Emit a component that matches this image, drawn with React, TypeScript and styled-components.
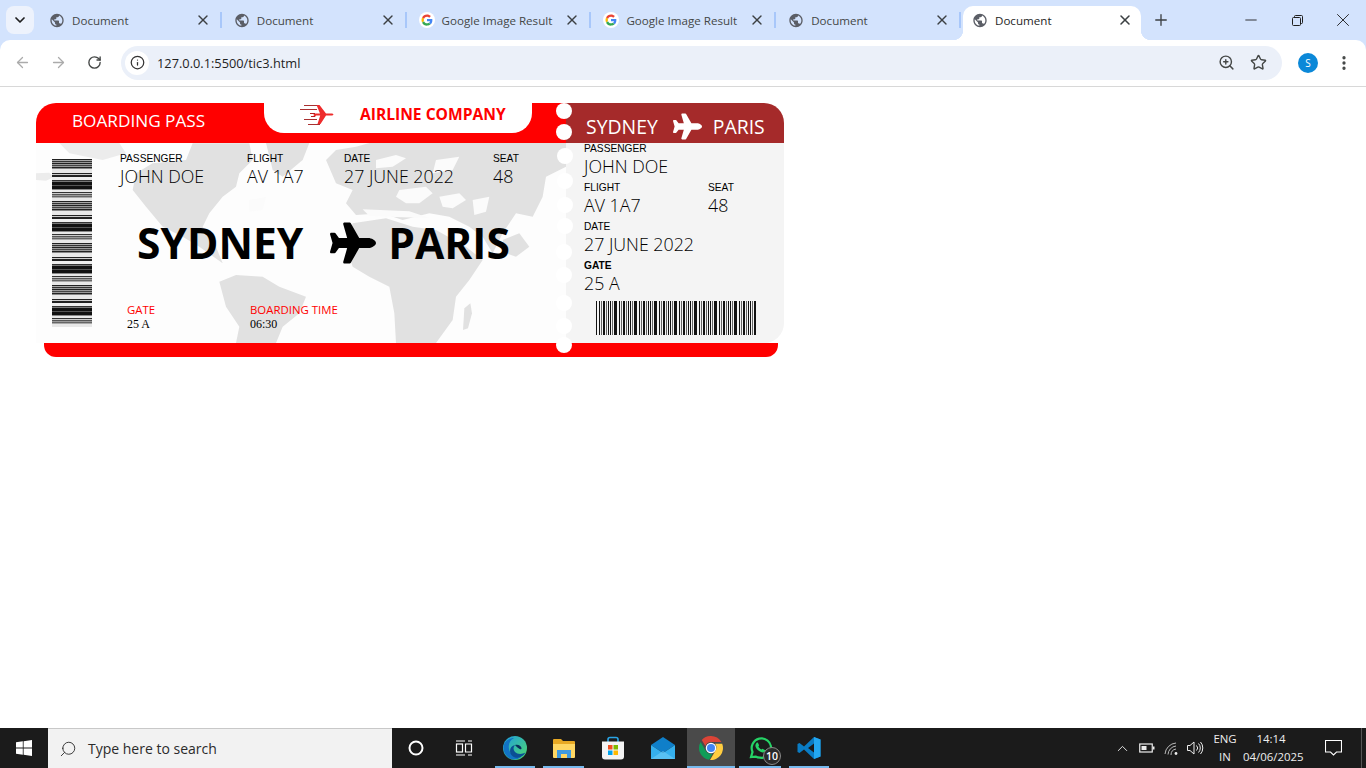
import React from "react";
import styled, { createGlobalStyle } from "styled-components";
import { FaPlane } from "react-icons/fa";
import { MdPublic } from "react-icons/md";
import { ChevronDown, ArrowLeft, ArrowRight, RotateCw, Info, ZoomIn, Star, EllipsisVertical, X, Plus, Minus, ChevronUp, Search } from "lucide-react";

const UI_FONT = `"Open Sans", "Noto Sans", sans-serif`;

const GlobalStyle = createGlobalStyle`
  html, body {
    margin: 0;
    height: 100%;
    background: #fff;
    overflow: hidden;
  }
  #root {
    height: 100%;
  }
  * {
    box-sizing: border-box;
  }
`;

const Screen = styled.div`
  display: flex;
  flex-direction: column;
  height: 768px;
  background: #d3e3fd;
  font-family: ${UI_FONT};
`;

/* browser chrome */
const TabStrip = styled.div`
  display: flex;
  align-items: flex-end;
  height: 40px;
  padding-left: 6px;
  background: #d3e3fd;
`;

const TabListButton = styled.div`
  display: flex;
  align-items: center;
  justify-content: center;
  width: 28px;
  height: 28px;
  margin: 0 3px 6px 0;
  border-radius: 8px;
  background: #edf2fc;
  color: #1f1f1f;
`;

const Tab = styled.div<{ $active?: boolean }>`
  position: relative;
  display: flex;
  align-items: center;
  flex: none;
  width: ${(p) => (p.$active ? "178px" : "184.8px")};
  height: 34px;
  margin-left: ${(p) => (p.$active ? "2px" : "0")};
  padding: 0 ${(p) => (p.$active ? "8px" : "11px")} 6px ${(p) => (p.$active ? "9px" : "12px")};
  border-radius: 10px 10px 0 0;
  background: ${(p) => (p.$active ? "#fff" : "transparent")};
  color: #444746;
  font-size: 11.6px;

  ${(p) =>
    p.$active
      ? `
    color: #1f1f1f;
    &::before, &::after {
      content: "";
      position: absolute;
      bottom: 0;
      width: 10px;
      height: 10px;
    }
    &::before {
      left: -10px;
      background: radial-gradient(circle at 0 0, transparent 10px, #fff 10.5px);
    }
    &::after {
      right: -10px;
      background: radial-gradient(circle at 100% 0, transparent 10px, #fff 10.5px);
    }
  `
      : `
    &::after {
      content: "";
      position: absolute;
      right: 0;
      top: 6px;
      width: 2px;
      height: 16px;
      background: #a8c7fa;
    }
  `}
`;

const TabIcon = styled.span`
  display: flex;
  align-items: center;
  justify-content: center;
  width: 16px;
  height: 16px;
  margin-right: 7px;
  color: #5b5e66;
`;

const TabTitle = styled.span`
  flex: 1;
  white-space: nowrap;
`;

const TabClose = styled.span`
  display: flex;
  color: #3c4043;
`;

const NewTab = styled.div`
  display: flex;
  align-items: center;
  justify-content: center;
  width: 20px;
  height: 40px;
  margin-left: 10px;
  color: #3c4043;
`;

const WindowButtons = styled.div`
  display: flex;
  align-items: center;
  align-self: stretch;
  margin-left: auto;
`;

const WindowButton = styled.div`
  display: flex;
  align-items: center;
  justify-content: center;
  width: 46px;
  height: 40px;
  color: #1f1f1f;
`;

const Toolbar = styled.div`
  display: flex;
  align-items: center;
  flex: none;
  height: 47px;
  padding: 0 0 1px 4px;
  border-bottom: 1px solid #d8d8d8;
  border-radius: 10px 10px 0 0;
  background: #fff;
`;

const NavButton = styled.div<{ $muted?: boolean }>`
  display: flex;
  align-items: center;
  justify-content: center;
  width: 36px;
  height: 34px;
  color: ${(p) => (p.$muted ? "#ababab" : "#444746")};
`;

const Omnibox = styled.div`
  display: flex;
  align-items: center;
  width: 1161px;
  height: 34px;
  margin-left: 9px;
  padding: 0 15px 0 4px;
  border-radius: 17px;
  background: #ebf0f9;
  color: #1f1f1f;
  font-size: 12.8px;
`;

const SiteChip = styled.span`
  display: flex;
  align-items: center;
  justify-content: center;
  width: 24px;
  height: 24px;
  margin-right: 8px;
  border-radius: 50%;
  background: #fff;
  color: #333;
`;

const Url = styled.span`
  flex: 1;
`;

const OmniIcon = styled.span`
  display: flex;
  margin-left: 15px;
  color: #444746;
`;

const Avatar = styled.div`
  display: flex;
  align-items: center;
  justify-content: center;
  width: 20px;
  height: 20px;
  margin-left: 16px;
  border-radius: 50%;
  background: #0b88d8;
  color: #fff;
  font-size: 10px;
`;

const MenuButton = styled.div`
  display: flex;
  margin-left: 17px;
  color: #444746;
`;

/* page with ticket */
const Page = styled.main`
  flex: 1;
  padding: 16px 0 0 36px;
  background: #fff;
`;

const Ticket = styled.div`
  position: relative;
  width: 748px;
`;

const TicketRow = styled.div`
  display: flex;
`;

const MainHeader = styled.div`
  display: flex;
  width: 530px;
  height: 40px;
  border-top-left-radius: 20px;
  background: #ff0000;
  color: #fff;
`;

const BoardingTitle = styled.div`
  width: 228px;
  padding: 6px 0 0 36px;
  font-size: 17.2px;
  line-height: 24px;
  white-space: nowrap;
`;

const LogoTab = styled.div`
  display: flex;
  align-items: flex-start;
  width: 268px;
  height: 30px;
  padding: 1px 0 0 36px;
  border-radius: 0 0 20px 20px;
  background: #fff;
  color: #ff0000;
  font-size: 15.6px;
  font-weight: 700;
`;

const LogoText = styled.span`
  margin-left: 26px;
  line-height: 20px;
  white-space: nowrap;
`;

const StubHeader = styled.div`
  display: flex;
  flex: 1;
  align-items: center;
  gap: 11px;
  height: 40px;
  padding: 6px 0 0 20px;
  border-top-right-radius: 20px;
  background: #a52a2a;
  color: #fff;
  font-size: 19.4px;
`;

const StubPlane = styled(FaPlane)`
  flex: none;
  margin-left: 4px;
`;

const MainPanel = styled.div`
  position: relative;
  width: 530px;
  height: 200px;
  overflow: hidden;
  background: #fdfdfd;
`;

const WorldMap = styled.svg`
  position: absolute;
  inset: 0;
  width: 530px;
  height: 200px;
  filter: blur(0.7px);
`;

const MainContent = styled.div`
  position: relative;
  display: flex;
  height: 100%;
  padding: 16px 0 0 16px;
`;

const BarcodeColumn = styled.div`
  flex: none;
  width: 68px;
`;

const Details = styled.div`
  flex: 1;
  display: flex;
  flex-direction: column;
`;

const InfoRow = styled.div`
  display: grid;
  grid-template-columns: 127px 97px 149px auto;
  margin-top: -6px;
`;

const Label = styled.div<{ $bold?: boolean }>`
  color: #000;
  font-family: "Liberation Sans", Arial, sans-serif;
  font-size: 10.2px;
  font-weight: ${(p) => (p.$bold ? 700 : 400)};
  line-height: 12px;
`;

const Value = styled.div`
  margin-top: -1px;
  color: #000;
  font-size: 17.8px;
  font-weight: 300;
  line-height: 25px;
  white-space: nowrap;
`;

const RouteRow = styled.div`
  display: flex;
  align-items: center;
  height: 48px;
  margin: 29px 0 0 17px;
  color: #000;
  font-size: 42.5px;
  font-weight: 700;
  white-space: nowrap;
`;

const RoutePlane = styled(FaPlane)`
  flex: none;
  margin: 2px 12px 0 27px;
`;

const TimeRow = styled.div`
  display: grid;
  grid-template-columns: 123px auto;
  margin: 37px 0 0 7px;
`;

const TimeLabel = styled.div`
  color: #ff0000;
  font-size: 11.4px;
  line-height: 14px;
  white-space: nowrap;
`;

const TimeValue = styled.div`
  color: #000;
  font-family: "Liberation Serif", "Times New Roman", serif;
  font-size: 12px;
  line-height: 14px;
`;

const StubPanel = styled.div`
  flex: 1;
  height: 200px;
  padding-left: 18px;
  border-bottom-right-radius: 20px;
  background: #f4f4f4;
`;

const StubGrid = styled.div`
  display: grid;
  grid-template-columns: 124px auto;
`;

const StubField = styled.div<{ $wide?: boolean }>`
  grid-column: ${(p) => (p.$wide ? "1 / -1" : "auto")};
  height: 39px;
`;

const StubBarcode = styled.svg`
  display: block;
  width: 161px;
  height: 34px;
  margin: 2px 0 0 12px;
`;

const Footer = styled.div`
  width: 734px;
  height: 14px;
  margin-left: 8px;
  border-radius: 0 0 12px 12px;
  background: #ff0000;
`;

const Hole = styled.span<{ $y: number; $x: number }>`
  position: absolute;
  top: ${(p) => p.$y - 8}px;
  left: ${(p) => p.$x}px;
  width: 16px;
  height: 16px;
  border-radius: 50%;
  background: #fff;
`;

/* taskbar */
const Taskbar = styled.footer`
  display: flex;
  align-items: stretch;
  flex: none;
  height: 40px;
  background: #1b1b1b;
  color: #fff;
`;

const StartButton = styled.div`
  display: flex;
  align-items: center;
  justify-content: center;
  width: 48px;
`;

const SearchBox = styled.div`
  display: flex;
  align-items: center;
  gap: 11px;
  width: 344px;
  padding-left: 11px;
  border-top: 1px solid #c8c8c8;
  background: #f2f2f2;
  color: #2b2b2b;
  font-size: 14px;
`;

const SearchGlyph = styled(Search)`
  transform: scaleX(-1);
`;

const TaskIcons = styled.div`
  display: flex;
`;

const TaskSlot = styled.div<{ $w: number; $active?: boolean; $open?: boolean }>`
  position: relative;
  display: flex;
  align-items: center;
  justify-content: center;
  width: ${(p) => p.$w}px;
  background: ${(p) => (p.$active ? "#4a4a4a" : "transparent")};

  ${(p) =>
    p.$open &&
    `
    &::after {
      content: "";
      position: absolute;
      bottom: 0;
      left: ${p.$active ? 0 : 4}px;
      right: ${p.$active ? 0 : 4}px;
      height: 2px;
      background: #76b9ed;
    }
  `}
`;

const Badge = styled.span`
  position: absolute;
  right: 4px;
  bottom: 3px;
  display: flex;
  align-items: center;
  justify-content: center;
  width: 18px;
  height: 18px;
  border: 1.5px solid #888;
  border-radius: 50%;
  background: #2a2a2a;
  font-size: 10.5px;
  font-weight: 600;
`;

const Tray = styled.div`
  display: flex;
  align-items: center;
  margin-left: auto;
  font-size: 11.4px;
`;

const TrayIcon = styled.span<{ $w: number }>`
  display: flex;
  align-items: center;
  justify-content: center;
  width: ${(p) => p.$w}px;
  color: #eee;
`;

const TrayText = styled.div<{ $w: number }>`
  width: ${(p) => p.$w}px;
  color: #eee;
  line-height: 18px;
  text-align: center;
  white-space: nowrap;
`;

const Notification = styled.div`
  display: flex;
  align-items: center;
  justify-content: center;
  align-self: stretch;
  width: 56px;
  margin: 0 4px 0 7px;
  border-right: 1px solid #555;
`;

const GoogleIcon = () => (
  <svg width="16" height="16" viewBox="0 0 48 48">
    <circle cx="24" cy="24" r="24" fill="#fff" />
    <path fill="#EA4335" d="M24 14.5c2.6 0 4.9.9 6.7 2.6l5-5C32.700 9.300 28.700 7.500 24 7.500c-6.500 0-12.100 3.700-14.800 9.100l5.800 4.500C16.400 17.200 19.900 14.500 24 14.500z" />
    <path fill="#4285F4" d="M40.100 24.400c0-1.200-.1-2.300-.3-3.400H24v6.500h9.100c-.4 2.100-1.600 3.900-3.400 5.100l5.600 4.300c3.200-3 4.800-7.400 4.800-12.500z" />
    <path fill="#FBBC05" d="M15 27c-.3-1-.5-2-.5-3s.2-2 .5-3l-5.800-4.500C8.100 18.800 7.500 21.300 7.500 24s.6 5.200 1.700 7.500L15 27z" />
    <path fill="#34A853" d="M24 40.500c4.500 0 8.200-1.500 11-4l-5.600-4.300c-1.500 1-3.400 1.600-5.400 1.600-4.100 0-7.600-2.700-9-6.300l-5.800 4.500c2.700 5.300 8.300 9 14.800 9z" />
  </svg>
);

const LogoPlane = () => (
  <svg width="34" height="24" viewBox="0 0 34 24">
    <g stroke="#a93030" strokeWidth="1">
      <path d="M4 1.500H19" />
      <path d="M0 5.500H17" />
      <path d="M4 15.500H17" />
      <path d="M8 20.500H20" />
    </g>
    <path
      fill="#ee2c2c"
      d="M13 9.500h7L16.500 1h3l6.500 8.500h5c1.500 0 2.500.5 2.500 1s-1 1-2.500 1h-5L20.500 20h-3l2.700-8.500H16l-1 1.500h-2l1-2z"
    />
    <path fill="#b82020" d="M10 9h5v1h-5zM11 12h4v1h-4z" />
  </svg>
);

// world map, hand traced
const WorldMapShape = () => (
  <WorldMap viewBox="0 9 1590 600" preserveAspectRatio="none">
    <g fill="#ececec">
      <path d="M70 9L250 9 270 40 200 60 100 40Z" />
      <path d="M0 100L40 98 52 112 30 122 0 120Z" />
    </g>
    <g fill="#e1e1e1">
      <path d="M290 150L300 100 350 70 450 60 470 10 640 10 650 60 610 100 600 140 560 170 520 220 500 260 540 320 560 370 490 320 440 290 380 260 330 200Z" />
      <path d="M690 9H820L800 60 740 110 710 90Z" />
      <path d="M550 425L600 405 680 410 730 440 810 470 790 520 740 560 720 609H600L610 560 570 500Z" />
      <path d="M870 60L900 30 960 20 1000 9H1590V80L1530 110 1520 170 1490 230 1440 220 1400 280 1370 340 1340 290 1300 260 1240 230 1180 220 1100 240 1040 220 960 225 930 190 950 150 900 130Z" />
      <path d="M950 250L1050 235 1130 260 1200 270 1290 320 1340 360 1300 420 1260 470 1250 540 1200 609H1080L1075 520 1060 440 1000 410 950 380 930 320Z" />
      <path d="M1285 505L1303 490 1308 520 1296 565 1281 570Z" />
      <path d="M1400 300L1450 280 1480 320 1440 350 1410 340Z" />
    </g>
    <g fill="#fbfbfb">
      <path d="M980 208L1120 214 1180 234 1100 232 1000 228Z" />
      <path d="M1210 170L1270 160 1290 180 1250 205 1220 200Z" />
      <path d="M1310 180L1360 170 1350 215 1315 225Z" />
      <path d="M1020 60L1080 45 1110 55 1070 80 1020 85Z" />
      <path d="M1090 150L1170 140 1190 160 1150 190 1110 190 1080 170Z" />
      <path d="M1200 60L1270 50 1250 90 1190 100Z" />
      <path d="M640 180L690 170 680 210 640 215Z" />
    </g>
  </WorldMap>
);

// horizontal bars of the left barcode, [height, shade]
const LEFT_BARS: [number, string][] = [
  [1, "#222"], [1, "#aaa"], [1, "#333"], [1, "#999"], [1, "#222"], [1, "#999"], [1, "#444"], [1, "#999"],
  [1, "#222"], [1, "#888"], [4, "#e8e8e8"], [1, "#222"], [1, "#ccc"], [2, "#222"], [3, "#eee"], [1, "#333"],
  [1, "#777"], [3, "#111"], [1, "#555"], [3, "#111"], [1, "#888"], [2, "#e8e8e8"], [1, "#333"], [1, "#ccc"],
  [1, "#555"], [1, "#999"], [1, "#666"], [1, "#aaa"], [3, "#e8e8e8"],
];

const BAR_GROUP = [0, 3, 5, 7, 8, 10, 12, 14, 16, 18];

const LeftBarcode = () => {
  const rows: React.ReactElement[] = [];
  let y = 0;
  let i = 0;
  while (y < 168) {
    const [h, fill] = LEFT_BARS[i % LEFT_BARS.length];
    rows.push(<rect key={i} x="0" y={y} width="40" height={h} fill={fill} />);
    y += h;
    i += 1;
  }
  return (
    <svg width="40" height="168" viewBox="0 0 40 168" shapeRendering="crispEdges" display="block">
      {rows}
    </svg>
  );
};

const RightBarcode = () => (
  <StubBarcode viewBox="0 0 161 34" shapeRendering="crispEdges">
    {Array.from({ length: 8 }).map((_, g) =>
      BAR_GROUP.map((b, n) => (
        <rect key={`${g}-${n}`} x={g * 20 + b} y="0" width={n === 9 ? 2 : 1} height="34" fill={n % 3 === 2 ? "#666" : "#111"} />
      ))
    )}
  </StubBarcode>
);

const WindowsLogo = () => (
  <svg width="16" height="16" viewBox="0 0 16 16" fill="#fff">
    <path d="M0 2.300l6.800-1v6.300H0zM7.600 1.200L16 0v7.600H7.600zM0 8.400h6.800v6.300l-6.800-1zM7.600 8.400H16V16l-8.400-1.200z" />
  </svg>
);

const EdgeIcon = () => (
  <svg width="24" height="24" viewBox="0 0 24 24">
    <defs>
      <linearGradient id="edgeA" x1="0" y1="0" x2="1" y2="1">
        <stop offset="0" stopColor="#1f9fe0" />
        <stop offset="1" stopColor="#4fd96b" />
      </linearGradient>
    </defs>
    <circle cx="12" cy="12" r="12" fill="url(#edgeA)" />
    <path fill="#1273c4" d="M.5 10C2 4 7 2 11 2c-4 2-6 6-5 11 1 5 6 9 12 8-3 2.500-7 3-10 2C3 21 0 16 .5 10z" />
    <path fill="#0b4f94" d="M22.500 16.500c-2 4-6.500 6-10.500 5-3-.8-5-3.500-5-6.500 0-3 2-5.500 5-6-2 2-2 5 0 7 2.500 2.500 7 2.500 10.500.5z" />
    <path fill="#0a2f5c" d="M12 9c3-1 6 .5 6.500 3 .2 1-.5 1.500-1.500 1.300C15 12 13 10.500 12 9z" />
  </svg>
);

const FolderIcon = () => (
  <svg width="22" height="20" viewBox="0 0 22 20">
    <path fill="#e8a924" d="M0 2a1 1 0 011-1h7l2 2h11a1 1 0 011 1v3H0z" />
    <path fill="#ffd763" d="M0 6h22v13a1 1 0 01-1 1H1a1 1 0 01-1-1z" />
    <path fill="#3f9ae0" d="M4 12h14v8h-4v-4H8v4H4z" />
  </svg>
);

const StoreIcon = () => (
  <svg width="24" height="24" viewBox="0 0 24 24">
    <path fill="none" stroke="#2aa5e6" strokeWidth="1.600" d="M7 6V3.500A2 2 0 019 1.500h6a2 2 0 012 2V6" />
    <path fill="#f4f4f4" d="M1 5.500h22v15a3 3 0 01-3 3H4a3 3 0 01-3-3z" />
    <rect x="7" y="9" width="4.500" height="4.500" fill="#f25022" />
    <rect x="12.500" y="9" width="4.500" height="4.500" fill="#7fba00" />
    <rect x="7" y="14.500" width="4.500" height="4.500" fill="#00a4ef" />
    <rect x="12.500" y="14.500" width="4.500" height="4.500" fill="#ffb900" />
  </svg>
);

const MailIcon = () => (
  <svg width="24" height="22" viewBox="0 0 24 22">
    <path fill="#0f7fc9" d="M0 8L12 0l12 8-12 8z" />
    <path fill="#35b0ee" d="M0 8l12 8 12-8v14H0z" />
    <path fill="#6fcdf7" d="M0 22l12-8 12 8z" opacity=".6" />
  </svg>
);

const ChromeIcon = () => (
  <svg width="24" height="24" viewBox="0 0 48 48">
    <path fill="#db4437" d="M24 0a24 24 0 0120.800 12H24a12 12 0 00-11.300 8L5.500 8A24 24 0 0124 0z" />
    <path fill="#0f9d58" d="M3.200 12L14 30.500A12 12 0 0027 35.700L20 47.700A24 24 0 013.200 12z" />
    <path fill="#ffcd40" d="M46.400 15.500A24 24 0 0122 48l10.500-18A12 12 0 0032 15.500z" />
    <circle cx="24" cy="24" r="10.500" fill="#fff" />
    <circle cx="24" cy="24" r="8" fill="#4285f4" />
  </svg>
);

const WhatsAppIcon = () => (
  <svg width="24" height="24" viewBox="0 0 24 24">
    <path fill="none" stroke="#25d366" strokeWidth="2.200" d="M3 21l1.500-5A9.700 9.700 0 1112 21.700a9.700 9.700 0 01-4.500-1.100z" />
    <path fill="#25d366" d="M8.500 7c.6-.6 1.200-.5 1.500 0l1 2c.2.400 0 .8-.6 1.500.7 1.400 1.700 2.300 3 3 .7-.6 1.100-.8 1.500-.6l2 1c.5.300.6.900 0 1.600-1 1.100-2.500 1.200-4.500.2-2.300-1.200-3.800-2.700-4.700-4.700-.6-1.500-.3-2.900.8-4z" />
  </svg>
);

const VsCodeIcon = () => (
  <svg width="24" height="24" viewBox="0 0 24 24">
    <path fill="#0a7cc4" d="M17 1L7 10.500 2.500 7 .5 8v8l2 1L7 13.500 17 23l6.500-2.500v-17zM17 7.500v9L11 12z" />
    <path fill="#23a7f0" d="M17 1l6.500 2.500v17L17 23z" />
  </svg>
);

const BatteryIcon = () => (
  <svg width="16" height="10" viewBox="0 0 16 10" fill="none">
    <rect x=".75" y="1" width="12.500" height="8" stroke="#eee" strokeWidth="1.200" />
    <rect x="2.500" y="3" width="5" height="4" fill="#eee" />
    <rect x="14" y="3.500" width="1.500" height="3" fill="#eee" />
  </svg>
);

const WifiIcon = () => (
  <svg width="15" height="15" viewBox="0 0 15 15" fill="none" stroke="#bbb" strokeWidth="1">
    <path d="M1 13A12 12 0 0112 2" />
    <path d="M4 13.500A9 9 0 0112 5" />
    <path d="M7 14A6 6 0 0112 8" />
    <circle cx="12" cy="12.500" r="1.400" fill="#eee" stroke="none" />
  </svg>
);

const VolumeIcon = () => (
  <svg width="17" height="14" viewBox="0 0 17 14" fill="none" stroke="#eee" strokeWidth="1">
    <path d="M.5 4.500h2.500L7 1v12L3 9.500H.5z" />
    <path d="M9.500 4.500a3.500 3.500 0 010 5" />
    <path d="M11.500 2.500a6.500 6.500 0 010 9" />
    <path d="M13.500 1a9 9 0 010 12" />
  </svg>
);

const ActionCenterIcon = () => (
  <svg width="17" height="16" viewBox="0 0 17 16" fill="none" stroke="#fff" strokeWidth="1.100">
    <path d="M.5.500h16v11.500h-5l-3 3-3-3h-5z" />
  </svg>
);

const RestoreIcon = () => (
  <svg width="11" height="11" viewBox="0 0 11 11" fill="none" stroke="#1f1f1f" strokeWidth="1">
    <rect x=".5" y="2.500" width="8" height="8" rx="1" />
    <path d="M2.500 2.500V1.500a1 1 0 011-1h6a1 1 0 011 1v6a1 1 0 01-1 1h-1" />
  </svg>
);

const TaskViewIcon = () => (
  <svg width="18" height="16" viewBox="0 0 18 16" fill="none" stroke="#fff" strokeWidth="1.200">
    <path d="M1 1h9M1 15h9" />
    <rect x="1.500" y="4" width="6" height="8" />
    <path d="M10.500 4h6v8h-6zM13 1h4M13 15h4" />
  </svg>
);

const TABS = [
  { title: "Document", google: false },
  { title: "Document", google: false },
  { title: "Google Image Result", google: true },
  { title: "Google Image Result", google: true },
  { title: "Document", google: false },
];

const HOLES = [
  { y: 111, x: 520 },
  { y: 132, x: 520 },
  { y: 156, x: 521 },
  { y: 181, x: 521 },
  { y: 205, x: 521 },
  { y: 226, x: 521 },
  { y: 252, x: 520 },
  { y: 275, x: 520 },
  { y: 303, x: 520 },
  { y: 326, x: 520 },
  { y: 345, x: 520 },
];

const App = () => {
  return (
    <Screen>
      <GlobalStyle />
      <TabStrip>
        <TabListButton>
          <ChevronDown size={16} strokeWidth={2.6} />
        </TabListButton>
        {TABS.map((tab, i) => (
          <Tab key={i}>
            <TabIcon>{tab.google ? <GoogleIcon /> : <MdPublic size={17} />}</TabIcon>
            <TabTitle>{tab.title}</TabTitle>
            <TabClose>
              <X size={16} strokeWidth={2} />
            </TabClose>
          </Tab>
        ))}
        <Tab $active>
          <TabIcon>
            <MdPublic size={17} />
          </TabIcon>
          <TabTitle>Document</TabTitle>
          <TabClose>
            <X size={16} strokeWidth={2.3} />
          </TabClose>
        </Tab>
        <NewTab>
          <Plus size={18} strokeWidth={1.8} />
        </NewTab>
        <WindowButtons>
          <WindowButton>
            <Minus size={18} strokeWidth={1.2} />
          </WindowButton>
          <WindowButton>
            <RestoreIcon />
          </WindowButton>
          <WindowButton>
            <X size={22} strokeWidth={1} />
          </WindowButton>
        </WindowButtons>
      </TabStrip>

      <Toolbar>
        <NavButton $muted>
          <ArrowLeft size={17} strokeWidth={1.8} />
        </NavButton>
        <NavButton $muted>
          <ArrowRight size={17} strokeWidth={1.8} />
        </NavButton>
        <NavButton>
          <RotateCw size={15} strokeWidth={2.2} />
        </NavButton>
        <Omnibox>
          <SiteChip>
            <Info size={15} strokeWidth={2} />
          </SiteChip>
          <Url>127.0.0.1:5500/tic3.html</Url>
          <OmniIcon>
            <ZoomIn size={17} strokeWidth={2} />
          </OmniIcon>
          <OmniIcon>
            <Star size={17} strokeWidth={2} />
          </OmniIcon>
        </Omnibox>
        <Avatar>S</Avatar>
        <MenuButton>
          <EllipsisVertical size={18} strokeWidth={2.4} />
        </MenuButton>
      </Toolbar>

      <Page>
        <Ticket>
          <TicketRow>
            <MainHeader>
              <BoardingTitle>BOARDING PASS</BoardingTitle>
              <LogoTab>
                <LogoPlane />
                <LogoText>AIRLINE COMPANY</LogoText>
              </LogoTab>
            </MainHeader>
            <StubHeader>
              <span>SYDNEY</span>
              <StubPlane size={29} />
              <span>PARIS</span>
            </StubHeader>
          </TicketRow>
          <TicketRow>
            <MainPanel>
              <WorldMapShape />
              <MainContent>
                <BarcodeColumn>
                  <LeftBarcode />
                </BarcodeColumn>
                <Details>
                  <InfoRow>
                    <div>
                      <Label>PASSENGER</Label>
                      <Value>JOHN DOE</Value>
                    </div>
                    <div>
                      <Label>FLIGHT</Label>
                      <Value>AV 1A7</Value>
                    </div>
                    <div>
                      <Label>DATE</Label>
                      <Value>27 JUNE 2022</Value>
                    </div>
                    <div>
                      <Label>SEAT</Label>
                      <Value>48</Value>
                    </div>
                  </InfoRow>
                  <RouteRow>
                    <span>SYDNEY</span>
                    <RoutePlane size={46} />
                    <span>PARIS</span>
                  </RouteRow>
                  <TimeRow>
                    <div>
                      <TimeLabel>GATE</TimeLabel>
                      <TimeValue>25 A</TimeValue>
                    </div>
                    <div>
                      <TimeLabel>BOARDING TIME</TimeLabel>
                      <TimeValue>06:30</TimeValue>
                    </div>
                  </TimeRow>
                </Details>
              </MainContent>
            </MainPanel>
            <StubPanel>
              <StubGrid>
                <StubField $wide>
                  <Label>PASSENGER</Label>
                  <Value>JOHN DOE</Value>
                </StubField>
                <StubField>
                  <Label>FLIGHT</Label>
                  <Value>AV 1A7</Value>
                </StubField>
                <StubField>
                  <Label>SEAT</Label>
                  <Value>48</Value>
                </StubField>
                <StubField $wide>
                  <Label>DATE</Label>
                  <Value>27 JUNE 2022</Value>
                </StubField>
                <StubField $wide>
                  <Label $bold>GATE</Label>
                  <Value>25 A</Value>
                </StubField>
              </StubGrid>
              <RightBarcode />
            </StubPanel>
          </TicketRow>
          <Footer />
          {HOLES.map((h) => (
            <Hole key={h.y} $x={h.x} $y={h.y - 103} />
          ))}
        </Ticket>
      </Page>

      <Taskbar>
        <StartButton>
          <WindowsLogo />
        </StartButton>
        <SearchBox>
          <SearchGlyph size={18} strokeWidth={1.2} />
          <span>Type here to search</span>
        </SearchBox>
        <TaskIcons>
          <TaskSlot $w={48}>
            <svg width="16" height="16" viewBox="0 0 16 16" fill="none" stroke="#fff" strokeWidth="2">
              <circle cx="8" cy="8" r="6.500" />
            </svg>
          </TaskSlot>
          <TaskSlot $w={48}>
            <TaskViewIcon />
          </TaskSlot>
          <TaskSlot $w={3} />
          <TaskSlot $w={48} $open>
            <EdgeIcon />
          </TaskSlot>
          <TaskSlot $w={49} $open>
            <FolderIcon />
          </TaskSlot>
          <TaskSlot $w={50}>
            <StoreIcon />
          </TaskSlot>
          <TaskSlot $w={49}>
            <MailIcon />
          </TaskSlot>
          <TaskSlot $w={48} $active $open>
            <ChromeIcon />
          </TaskSlot>
          <TaskSlot $w={50} $open>
            <WhatsAppIcon />
            <Badge>10</Badge>
          </TaskSlot>
          <TaskSlot $w={48} $open>
            <VsCodeIcon />
          </TaskSlot>
        </TaskIcons>
        <Tray>
          <TrayIcon $w={24}>
            <ChevronUp size={17} strokeWidth={1.3} />
          </TrayIcon>
          <TrayIcon $w={25}>
            <BatteryIcon />
          </TrayIcon>
          <TrayIcon $w={25}>
            <WifiIcon />
          </TrayIcon>
          <TrayIcon $w={23}>
            <VolumeIcon />
          </TrayIcon>
          <TrayText $w={36}>
            ENG
            <br />
            IN
          </TrayText>
          <TrayText $w={56}>
            14:14
            <br />
            04/06/2025
          </TrayText>
          <Notification>
            <ActionCenterIcon />
          </Notification>
        </Tray>
      </Taskbar>
    </Screen>
  );
};

export default App;
